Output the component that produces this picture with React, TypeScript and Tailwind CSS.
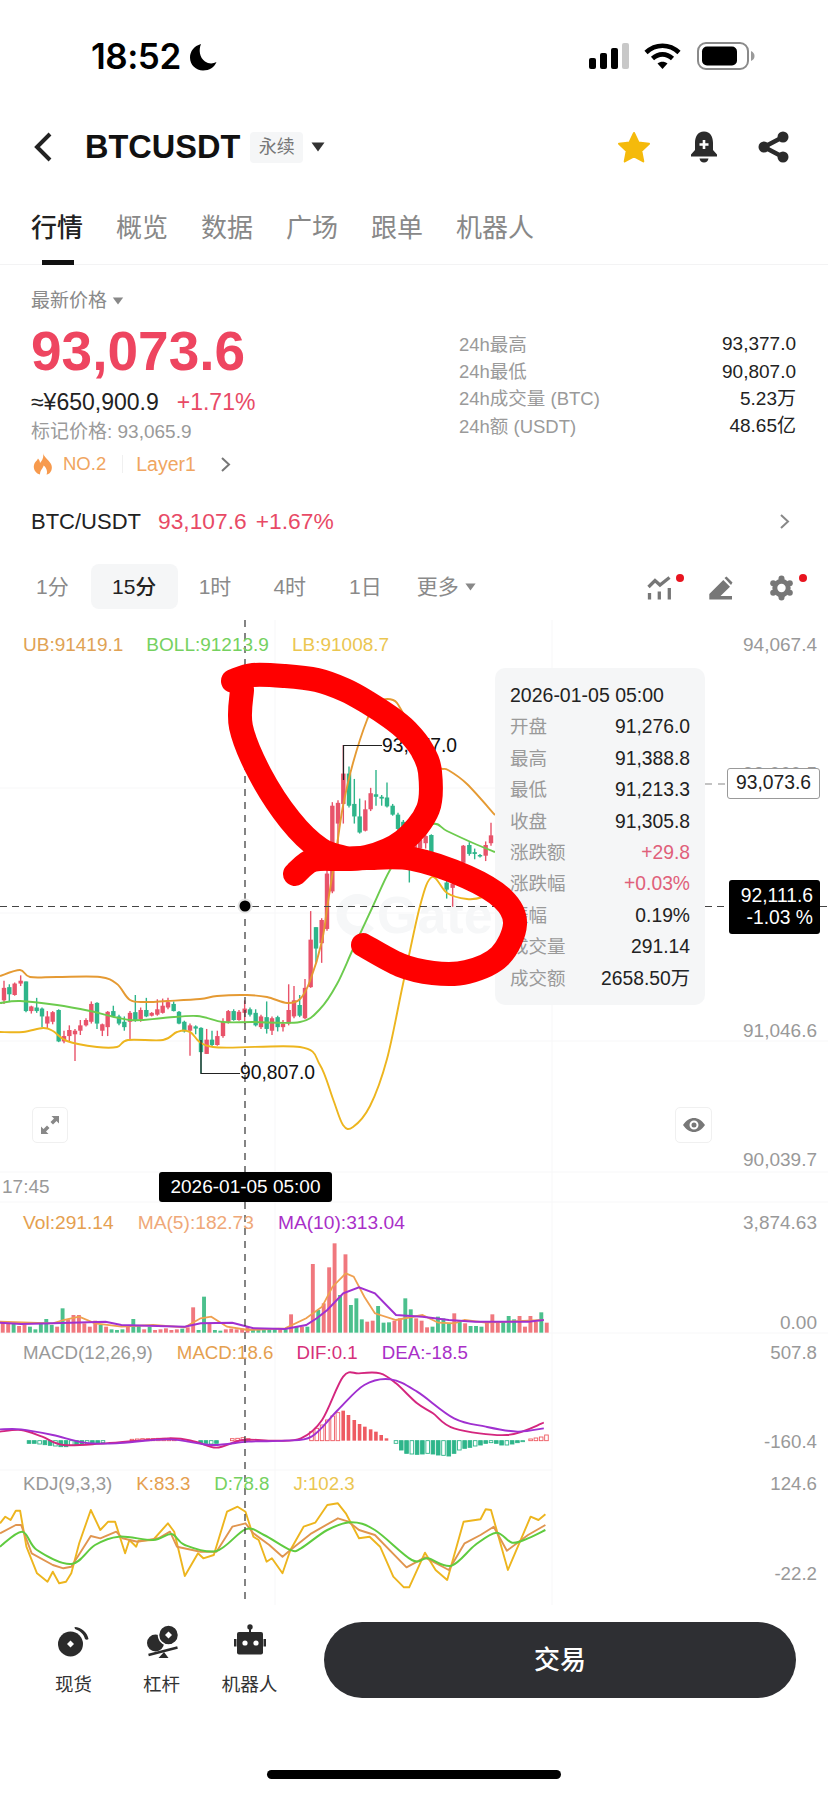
import React from "react";

type P = [number, number];
const smooth = (pts: P[]) => {
  let d = `M${pts[0][0]} ${pts[0][1]}`;
  for (let i = 0; i < pts.length - 1; i++) {
    const p0 = pts[Math.max(i - 1, 0)], p1 = pts[i], p2 = pts[i + 1], p3 = pts[Math.min(i + 2, pts.length - 1)];
    d += ` C${(p1[0] + (p2[0] - p0[0]) / 6).toFixed(1)} ${(p1[1] + (p2[1] - p0[1]) / 6).toFixed(1)} ${(p2[0] - (p3[0] - p1[0]) / 6).toFixed(1)} ${(p2[1] - (p3[1] - p1[1]) / 6).toFixed(1)} ${p2[0]} ${p2[1]}`;
  }
  return d;
};
const line = (pts: P[]) => pts.map((p) => `${p[0].toFixed(1)},${p[1].toFixed(1)}`).join(" ");
const zs = 1.894;
const conv = (base: number, pts: number[][]): P[] => pts.map(([x, y]) => [x / zs, base + y / 3]);

const upper: P[] = [[0,976],[20,970],[30,977],[57,977],[100,977],[117,984],[130,1000],[147,1002],[167,1001],[200,999],[217,996],[247,995],[267,997],[287,1003],[300,999],[310,981],[322,941],[328,902],[337,845],[343,806],[353,763],[367,720],[377,702],[393,700],[403,713],[425,755],[440,768],[448,770],[467,784],[495,815]];
const mid: P[] = [[0,1003],[20,1001],[57,1005],[90,1011],[130,1020],[163,1018],[197,1016],[223,1022],[253,1022],[300,1022],[320,1009],[337,984],[353,949],[373,906],[390,870],[410,841],[433,824],[447,831],[473,843],[495,852]];
const lower: P[] = [[0,1032],[23,1032],[43,1028],[53,1031],[67,1041],[97,1047],[117,1047],[128,1040],[163,1040],[177,1032],[190,1032],[213,1047],[300,1047],[320,1065],[333,1099],[343,1125],[353,1127],[370,1106],[387,1059],[403,984],[420,906],[432,877],[447,893],[467,899],[483,897],[495,890]];

// x, wickTop, bodyTop, bodyBottom, wickBottom (zoom units), colour
const candles: [number, number, number, number, number, string][] = [
[12,1010,1030,1065,1075,"r"],[28,1020,1028,1048,1070,"g"],[44,1015,1018,1050,1052,"r"],[62,995,1010,1018,1025,"r"],[78,1012,1012,1095,1098,"g"],[94,1080,1082,1095,1102,"r"],[110,1058,1085,1095,1100,"g"],[126,1085,1088,1110,1140,"g"],[142,1095,1110,1130,1145,"r"],[158,1095,1098,1125,1132,"r"],[176,1090,1092,1180,1182,"g"],[192,1150,1165,1180,1185,"r"],[208,1135,1148,1165,1180,"r"],[225,1145,1150,1160,1235,"r"],[241,1120,1135,1150,1162,"r"],[258,1115,1120,1135,1138,"r"],[274,1068,1075,1125,1130,"r"],[291,1070,1072,1130,1145,"g"],[307,1130,1132,1150,1165,"r"],[323,1095,1097,1140,1165,"r"],[340,1080,1095,1110,1112,"g"],[357,1105,1110,1130,1135,"g"],[373,1110,1125,1140,1150,"g"],[390,1095,1100,1125,1175,"r"],[406,1050,1098,1120,1125,"g"],[422,1085,1092,1118,1125,"r"],[439,1058,1092,1110,1112,"g"],[455,1098,1100,1108,1110,"r"],[472,1062,1090,1105,1108,"r"],[488,1060,1080,1100,1102,"r"],[504,1058,1070,1085,1090,"r"],[521,1068,1075,1095,1096,"g"],[537,1095,1097,1130,1132,"g"],[553,1122,1125,1152,1155,"g"],[570,1130,1135,1150,1220,"r"],[587,1135,1138,1144,1160,"g"],[603,1140,1142,1210,1270,"g"],[620,1145,1175,1215,1215,"r"],[636,1150,1175,1190,1195,"g"],[652,1150,1165,1190,1192,"r"],[669,1115,1125,1165,1170,"r"],[685,1092,1095,1125,1130,"r"],[701,1090,1095,1120,1122,"g"],[717,1092,1097,1120,1122,"r"],[734,1065,1088,1100,1130,"r"],[750,1085,1090,1105,1110,"g"],[767,1090,1100,1135,1138,"g"],[783,1105,1110,1140,1145,"r"],[800,1068,1112,1145,1158,"g"],[816,1110,1115,1150,1162,"r"],[833,1108,1112,1140,1152,"g"],[849,1120,1130,1140,1152,"r"],[866,1020,1092,1130,1135,"r"],[882,1025,1065,1110,1115,"r"],[899,1050,1078,1108,1112,"g"],[915,1005,1030,1115,1118,"r"],[932,815,895,1028,1030,"r"],[948,860,860,920,960,"g"],[965,835,840,905,960,"r"],[981,700,710,865,870,"r"],[997,510,520,760,765,"r"],[1014,505,512,570,640,"r"],[1030,350,430,515,570,"r"],[1047,410,430,520,525,"g"],[1063,445,515,550,570,"g"],[1079,500,550,595,598,"g"],[1096,505,530,590,592,"r"],[1112,470,485,530,535,"r"],[1128,420,488,495,520,"g"],[1145,490,495,500,520,"g"],[1161,455,497,522,525,"g"],[1178,515,520,545,548,"g"],[1194,540,545,585,590,"g"],[1210,560,565,590,600,"g"],[1228,600,640,660,735,"g"],[1244,600,620,645,650,"r"],[1260,605,615,640,650,"r"],[1277,600,605,625,640,"r"],[1294,600,602,655,660,"g"],[1340,730,735,755,780,"g"],[1358,730,738,750,803,"r"],[1390,630,632,680,690,"r"],[1408,622,630,655,660,"g"],[1424,640,650,655,670,"g"],[1440,655,658,662,665,"g"],[1457,620,630,660,675,"r"],[1473,568,603,625,632,"r"],
];
const RED = "#E8536A";
const GREEN = "#2EB58A";
const my = (v: number) => 620 + v / 2.8;

// volume tops, negative = green
const vol = [458,460,-462,468,464,-470,-478,-462,-447,-465,470,-415,448,435,435,460,470,452,-465,470,-478,-480,-478,468,-447,-465,478,-470,480,478,475,480,478,-476,472,412,-480,-380,460,-480,-482,478,476,478,476,470,-478,-480,-476,-478,-476,478,-478,433,-470,470,-470,282,-420,400,292,220,-375,253,-405,-385,-448,455,452,-408,-458,-457,452,445,-385,-418,445,452,472,-470,-440,-445,-460,430,-455,460,-468,-468,-470,455,433,455,-455,-438,-448,438,470,438,455,-427,458];

const ma10 = conv(1170, [[0,458],[40,462],[100,460],[200,455],[230,465],[350,470],[380,460],[440,458],[480,475],[540,477],[580,465],[600,445],[620,420],[650,370],[680,352],[710,370],[750,435],[800,440],[850,450],[900,455],[1000,455],[1030,450]]);
const ma5 = conv(1170, [[0,455],[100,460],[120,450],[150,440],[180,460],[230,470],[290,465],[350,472],[380,445],[400,440],[430,470],[470,480],[540,475],[580,445],[610,410],[630,350],[655,310],[670,320],[690,380],[710,430],[750,450],[800,435],[830,458],[860,460],[880,450],[920,458],[1030,450]]);
const dif = conv(1170, [[0,785],[40,780],[80,800],[120,825],[200,820],[320,805],[370,815],[410,833],[460,810],[520,812],[570,805],[610,750],[650,620],[680,610],[720,610],[750,640],[790,700],[820,730],[860,775],[960,795],[1030,758]]);
const dea = conv(1170, [[0,778],[40,778],[100,795],[160,818],[220,820],[320,808],[400,825],[470,815],[540,812],[590,800],[640,720],[690,645],[740,628],[790,665],[860,745],[920,770],[980,785],[1030,775]]);
const macdRed = [[590,785],[600,775],[610,765],[620,750],[630,738],[640,728],[650,722],[660,735],[671,750],[681,762],[691,770],[702,778],[712,785],[722,795],[732,805]];
const macdGreen = [[750,820],[760,840],[770,850],[780,852],[790,853],[800,852],[810,850],[820,852],[830,855],[840,856],[850,858],[860,850],[870,840],[880,835],[890,832],[900,828],[910,825],[920,820],[930,818],[940,820],[950,825],[960,825],[970,822],[980,818],[990,815],[55,820],[65,820],[75,822],[85,824],[95,826],[105,828],[115,830],[125,830],[135,826],[145,826],[155,824],[165,822],[175,820],[185,820],[195,818],[380,818],[390,820],[400,822],[410,820]];
const macdSmallRed = [[250,808],[260,807],[270,806],[280,806],[290,806],[300,805],[310,805],[320,805],[330,806],[440,806],[450,805],[460,803],[470,806],[1005,807],[1015,804],[1025,801],[1035,795]];

const kJ = conv(1470, [[0,160],[10,140],[20,150],[30,122],[38,122],[50,230],[70,310],[90,335],[100,305],[112,340],[125,335],[135,310],[150,220],[172,120],[190,180],[205,155],[218,155],[237,250],[245,210],[258,230],[262,212],[290,210],[318,160],[330,185],[350,318],[375,250],[385,265],[405,255],[430,125],[450,110],[465,125],[480,200],[490,210],[505,275],[515,265],[535,310],[550,240],[575,170],[597,158],[620,105],[640,100],[655,130],[680,205],[700,200],[720,230],[745,320],[765,352],[775,352],[805,248],[825,300],[847,330],[878,155],[910,148],[920,118],[930,120],[962,300],[1005,140],[1020,150],[1033,133]]);
const kK = conv(1470, [[0,190],[30,165],[40,165],[60,250],[100,285],[120,295],[135,290],[172,198],[190,205],[220,185],[232,205],[260,215],[300,205],[322,185],[335,230],[380,245],[410,245],[440,170],[465,160],[480,190],[510,225],[535,260],[550,240],[590,190],[640,145],[660,155],[680,180],[710,195],[770,292],[805,262],[850,300],[880,220],[910,195],[935,170],[960,242],[1000,195],[1033,165]]);
const kD = conv(1470, [[0,230],[42,185],[70,240],[135,282],[180,225],[225,200],[290,210],[325,192],[350,225],[410,243],[465,178],[500,195],[550,240],[570,235],[620,180],[665,157],[710,180],[780,270],[810,265],[855,287],[900,225],[940,188],[970,218],[1000,205],[1033,180]]);

const tipRows: [string, string, string][] = [
  ["开盘", "91,276.0", "text-[#222]"],
  ["最高", "91,388.8", "text-[#222]"],
  ["最低", "91,213.3", "text-[#222]"],
  ["收盘", "91,305.8", "text-[#222]"],
  ["涨跌额", "+29.8", "text-[#E0607A]"],
  ["涨跌幅", "+0.03%", "text-[#E0607A]"],
  ["振幅", "0.19%", "text-[#222]"],
  ["成交量", "291.14", "text-[#222]"],
  ["成交额", "2658.50万", "text-[#222]"],
];
const stats = [
  ["24h最高", "93,377.0"],
  ["24h最低", "90,807.0"],
  ["24h成交量 (BTC)", "5.23万"],
  ["24h额 (USDT)", "48.65亿"],
];
const tabs = ["概览", "数据", "广场", "跟单", "机器人"];

function Plots() {
  return (
    <svg className="absolute left-0 top-0" width="828" height="985" viewBox="0 620 828 985" fill="none">
      {/* watermark mark */}
      <path d="M370 905A16 16 0 1 0 370 925" stroke="#f6f7f8" strokeWidth="10" />
      {/* grid */}
      <g stroke="#f7f7f8" strokeWidth="1">
        <path d="M552 620V1605M275 620V1172M275 1202V1605M0 788H552M0 913H552M0 1041H828M0 1172H828M0 1202H828M0 1333H828M0 1470H552" />
      </g>
      <g strokeLinecap="butt">
        {candles.map(([x, wt, bt, bb, wb, c], i) => {
          const col = c === "r" ? RED : GREEN;
          const cx = x / 3;
          return (
            <g key={i}>
              <line x1={cx} x2={cx} y1={my(wt)} y2={my(wb)} stroke={col} strokeWidth="1.4" />
              <rect x={cx - 2.2} y={my(bt)} width="4.4" height={Math.max((bb - bt) / 2.8, 1.5)} fill={col} />
            </g>
          );
        })}
      </g>
      <path d={smooth(upper)} stroke="#E59A33" strokeWidth="1.9" />
      <path d={smooth(mid)} stroke="#6CCB4E" strokeWidth="1.9" />
      <path d={smooth(lower)} stroke="#EDB51E" strokeWidth="1.9" />
      {/* high / low markers */}
      <path d="M343.5 780V745.5H382" stroke="#222" strokeWidth="1.2" />
      <path d="M201 1040V1073.5H240" stroke="#222" strokeWidth="1.2" />
      {/* dashed guides */}
      <path d="M705 784H727" stroke="#888" strokeWidth="1.2" strokeDasharray="7 6" />
      <path d="M552 784H705" stroke="#eee" strokeWidth="1" />
      <path d="M0 906.5H495M705 906.5H729M820 906.5H828" stroke="#444" strokeWidth="1.2" strokeDasharray="7 5" />
      {/* volume */}
      {vol.map((t, i) => {
        const top = Math.abs(t);
        return <rect key={i} x={i * 5.44 + 0.8} y={1170 + top / 3} width="3.9" height={(488 - top) / 3} fill={t < 0 ? "#4CC08D" : "#F0787E"} />;
      })}
      <polyline points={line(ma5)} stroke="#EFA050" strokeWidth="1.8" />
      <polyline points={line(ma10)} stroke="#A030D0" strokeWidth="2" />
      {/* macd */}
      {macdRed.map(([x, t], i) => (
        <rect key={i} x={x / zs - 1.8} y={1170 + t / 3} width="3.6" height={(812 - t) / 3} fill={x >= 645 ? "#EE5A62" : "#fff"} stroke="#EE5A62" strokeWidth={x >= 645 ? 0 : 0.9} />
      ))}
      {macdGreen.map(([x, b], i) => (
        <rect key={i} x={x / zs - 1.8} y={1170 + 812 / 3} width="3.6" height={(b - 812) / 3} fill={i % 3 === 0 ? "#fff" : "#2EB58A"} stroke="#2EB58A" strokeWidth="0.9" />
      ))}
      {macdSmallRed.map(([x, t], i) => (
        <rect key={i} x={x / zs - 1.8} y={1170 + t / 3} width="3.6" height={(812 - t) / 3} fill="#fff" stroke="#EE5A62" strokeWidth="0.9" />
      ))}
      <path d={smooth(dif)} stroke="#D4267E" strokeWidth="1.9" />
      <path d={smooth(dea)} stroke="#A030D0" strokeWidth="1.9" />
      {/* kdj */}
      <polyline points={line(kJ)} stroke="#EDB51E" strokeWidth="1.9" strokeLinejoin="round" />
      <polyline points={line(kK)} stroke="#E0954F" strokeWidth="1.9" strokeLinejoin="round" />
      <path d={smooth(kD)} stroke="#5FCB3F" strokeWidth="2" />
      {/* crosshair */}
      <path d="M245 620V1172M245 1202V1602" stroke="#333" strokeWidth="1.2" strokeDasharray="7 6" />
      <circle cx="245" cy="906" r="7.5" fill="#e6e6e6" />
      <circle cx="245" cy="906" r="5.5" fill="#000" />
    </svg>
  );
}

function Scribble() {
  return (
    <svg className="absolute left-0 top-0 z-30" width="828" height="985" viewBox="0 620 828 985" fill="none" stroke="#FF0000" strokeWidth="24" strokeLinecap="round" strokeLinejoin="round">
      <path d={smooth([[233,681],[253,675],[285,676],[317,680],[345,690],[367,702],[390,717],[407,731],[422,750],[430,772],[428,809],[403,841],[367,857],[330,859]])} />
      <path d={smooth([[242,690],[241,727],[260,774],[290,820],[320,849],[345,858]])} />
      <path d={smooth([[295,874],[313,860],[345,859],[367,858],[413,859],[467,877],[503,899],[515,924],[500,956],[467,972],[433,973],[400,965],[363,945]])} />
    </svg>
  );
}

const Tri = ({ cls, fill }: { cls: string; fill: string }) => (
  <svg className={cls} viewBox="0 0 14 10"><path d="M0.5 0.5H13.5L7 9.5Z" fill={fill} /></svg>
);

export default function App() {
  return (
    <div className="relative flex h-[1795px] w-[828px] flex-col overflow-hidden bg-white font-['Liberation_Sans','Noto_Sans_CJK_SC',sans-serif] text-[#222]">
      {/* status bar */}
      <div className="flex h-[110px] shrink-0 items-start pl-[91px] pr-[73px] pt-[37px]">
        <span className="font-['Inter',sans-serif] text-[35px] font-semibold leading-[38px] tracking-[-0.5px] text-black">18:52</span>
        <svg className="ml-[9px] mt-[6px]" width="27" height="28" viewBox="0 0 27 28"><path d="M11 1C4 3 0 8.500 0 14.500 0 22 6 27.500 13 27.500 19.500 27.500 24.500 24 26.500 19 23 21 18.500 21 15 18.500 9.500 14.500 8.500 7 11 1Z" fill="#000" /></svg>
        <div className="ml-auto flex items-start">
          <svg className="mt-[6px]" width="40" height="26" viewBox="0 0 40 26">
            <rect x="0" y="15" width="7" height="11" rx="2" fill="#000" /><rect x="11" y="10" width="7" height="16" rx="2" fill="#000" /><rect x="22" y="5" width="7" height="21" rx="2" fill="#000" /><rect x="33" y="0" width="7" height="26" rx="2" fill="#c8c8c8" />
          </svg>
          <svg className="ml-[15px] mt-[6px]" width="37" height="26" viewBox="0 0 37 26" fill="none" stroke="#000" strokeWidth="4.6">
            <path d="M2 9.500C11.500 0.500 25.500 0.500 35 9.500" /><path d="M8.500 15.500C14.500 10 22.500 10 28.500 15.500" /><path d="M18.500 26L13.500 20.500C16.500 18 20.500 18 23.500 20.500Z" fill="#000" stroke="none" />
          </svg>
          <svg className="ml-[16px] mt-[5px]" width="58" height="28" viewBox="0 0 58 28">
            <rect x="1" y="1" width="50" height="26" rx="8" fill="#fff" stroke="#8a8a8a" strokeWidth="2" />
            <rect x="5" y="4.500" width="35" height="19" rx="5" fill="#000" />
            <path d="M54 9C56.500 10 57.500 12 57.500 14S56.500 18 54 19Z" fill="#9a9a9a" />
          </svg>
        </div>
      </div>
      {/* header */}
      <div className="flex h-[74px] shrink-0 items-center pl-[33px] pr-[39px]">
        <svg width="20" height="30" viewBox="0 0 20 30" fill="none"><path d="M17 2L4 15L17 28" stroke="#222" strokeWidth="4" /></svg>
        <span className="ml-[32px] text-[32.500px] font-bold leading-none text-[#111]">BTCUSDT</span>
        <span className="ml-[10px] flex h-[31px] w-[53px] items-center justify-center rounded-[4px] bg-[#f5f6f7] text-[18px] text-[#777]">永续</span>
        <Tri cls="ml-[8px] h-[10px] w-[14px]" fill="#333" />
        <svg className="ml-auto" width="34" height="32" viewBox="0 0 34 32"><path d="M17 2L21.500 11.500L32 12.800L24.300 20L26.300 30.500L17 25.300L7.700 30.500L9.700 20L2 12.800L12.500 11.500Z" fill="#F5BA0B" stroke="#F5BA0B" strokeWidth="2" strokeLinejoin="round" /></svg>
        <svg className="ml-[38px]" width="30" height="32" viewBox="0 0 30 32">
          <path d="M15 0.500C8.500 0.500 6 6 6 12V19L2 23.500V25.500H28V23.500L24 19V12C24 6 21.500 0.500 15 0.500Z" fill="#2b2b2b" />
          <path d="M10.500 27.500H19.500C19 30 17.500 31.500 15 31.500S11 30 10.500 27.500Z" fill="#2b2b2b" />
          <path d="M15 9V18M10.500 13.500H19.500" stroke="#fff" strokeWidth="2.600" />
        </svg>
        <svg className="ml-[39px]" width="31" height="32" viewBox="0 0 31 32">
          <path d="M25 6L6 16L25 26" fill="none" stroke="#2b2b2b" strokeWidth="4.500" />
          <circle cx="25" cy="6" r="5.500" fill="#2b2b2b" /><circle cx="6" cy="16" r="5.500" fill="#2b2b2b" /><circle cx="25" cy="26" r="5.500" fill="#2b2b2b" />
        </svg>
      </div>
      {/* tabs */}
      <div className="flex h-[81px] shrink-0 items-start gap-[33px] border-b border-[#f3f3f4] pl-[31px] pt-[30px] text-[26px] leading-[28px] text-[#888]">
        <div className="relative h-[51px] font-medium text-[#222]">
          行情
          <span className="absolute bottom-0 left-[11px] h-[5px] w-[32px] bg-[#111]" />
        </div>
        {tabs.map((t) => <span key={t}>{t}</span>)}
      </div>
      {/* summary */}
      <div className="flex h-[236px] shrink-0 pl-[31px] pr-[32px]">
        <div className="flex w-[428px] flex-col pt-[24px]">
          <div className="flex h-[24px] items-center text-[19px] leading-[24px] text-[#8a8a8a]">
            最新价格<Tri cls="ml-[5px] h-[8px] w-[12px]" fill="#888" />
          </div>
          <div className="mt-[10px] h-[56px] text-[55px] font-bold leading-[56px] text-[#EE4560]">93,073.6</div>
          <div className="mt-[10px] flex h-[26px] items-center text-[23px] leading-[26px]">
            <span className="text-[#222]">≈¥650,900.9</span>
            <span className="ml-[18px] text-[#E84A66]">+1.71%</span>
          </div>
          <div className="mt-[5px] h-[24px] text-[19px] leading-[24px] text-[#9a9a9a]">标记价格: 93,065.9</div>
          <div className="mt-[8px] flex h-[24px] items-center text-[18.500px] leading-[24px] text-[#F0A560]">
            <svg className="ml-[2px]" width="20" height="22" viewBox="0 0 20 22"><path d="M10 0C11 4 15 6 18 11 20.500 16 17 22 13.500 21.500 15 18 13 14 10.500 12.500 10.500 15 7 17 7 21.500 2.500 20.500 0 16 1 12 1.500 9 4 8 5 5.500 6.500 7 7 8.500 7 10 9.500 7 11 4 10 0Z" fill="#F79A4D" /></svg>
            <span className="ml-[10px]">NO.2</span>
            <span className="ml-[16px] h-[18px] w-px bg-[#f0f0f0]" />
            <span className="ml-[13px] text-[19.500px]">Layer1</span>
            <svg className="ml-[24px]" width="11" height="15" viewBox="0 0 11 15" fill="none"><path d="M2 1L9 7.500L2 14" stroke="#777" strokeWidth="2" /></svg>
          </div>
        </div>
        <div className="flex flex-1 flex-col pt-[66px]">
          {stats.map(([l, v]) => (
            <div key={l} className="flex h-[27.33px] items-center justify-between text-[18.500px]">
              <span className="text-[#9a9a9a]">{l}</span>
              <span className="text-[19px] text-[#222]">{v}</span>
            </div>
          ))}
        </div>
      </div>
      {/* spot link */}
      <div className="flex h-[40px] shrink-0 items-center pl-[31px] pr-[38px] text-[22.800px]">
        <span className="text-[22px] text-[#222]">BTC/USDT</span>
        <span className="ml-[17px] text-[#E84A66]">93,107.6</span>
        <span className="ml-[9px] text-[#E84A66]">+1.67%</span>
        <svg className="ml-auto" width="11" height="15" viewBox="0 0 11 15" fill="none"><path d="M2 1L9 7.500L2 14" stroke="#888" strokeWidth="2" /></svg>
      </div>
      {/* intervals */}
      <div className="mt-[23px] flex h-[45px] shrink-0 items-center pl-[36px] text-[21px] text-[#8a8a8a]">
        <span>1分</span>
        <span className="ml-[22px] flex h-[45px] w-[87px] items-center justify-center rounded-[8px] bg-[#f5f6f7] font-medium text-[#222]">15分</span>
        <span className="ml-[21px]">1时</span>
        <span className="ml-[42px]">4时</span>
        <span className="ml-[43px]">1日</span>
        <span className="ml-[35px]">更多</span>
        <Tri cls="ml-[6px] h-[8px] w-[11px]" fill="#888" />
        <svg className="ml-auto mr-[8px]" width="190" height="45" viewBox="630 562 190 45" fill="none">
          <path d="M648.500 585L655 578.500L660 583L669.500 575.500" stroke="#777" strokeWidth="3.300" />
          <path d="M649.500 591V597.500M659.300 589.500V597.500M669.300 586V597.500" stroke="#777" strokeWidth="3.300" />
          <path d="M709.300 592L723.300 578L730 584.700L720.500 594H732V597.500H709.300Z" fill="#777" />
          <path d="M724.500 576L726.500 574.500L732.500 580.500L731 583Z" fill="#777" />
          {[30, 90, 150, 210, 270, 330].map((a) => (
            <circle key={a} cx={781.5 + 9.6 * Math.cos((a * Math.PI) / 180)} cy={586 + 9.6 * Math.sin((a * Math.PI) / 180)} r="3" fill="#777" />
          ))}
          <circle cx="781.500" cy="586" r="6.700" fill="none" stroke="#777" strokeWidth="5" />
          <circle cx="803" cy="576" r="4" fill="#E8141F" /><circle cx="680" cy="576" r="4" fill="#E8141F" />
        </svg>
      </div>
      {/* chart */}
      <div className="relative mt-[11px] h-[985px] shrink-0">
        <div className="absolute left-[377px] top-[265px] text-[52px] font-bold leading-[60px] text-[#f6f7f8]">Gate</div>
        <Plots />
        {/* main */}
        <div className="relative flex h-[552px] items-start justify-between pr-[11px] pt-[14px] text-[19px] leading-[22px]">
          <div className="flex pl-[23px]">
            <span className="text-[#E0A255]">UB:91419.1</span>
            <span className="ml-[23px] text-[#75D160]">BOLL:91213.9</span>
            <span className="ml-[23px] text-[#EBC651]">LB:91008.7</span>
          </div>
          <div className="flex h-full flex-col items-end justify-between pb-[1px] text-[#999]">
            <span>94,067.4</span><span>93,060.5</span><span>92,053.5</span><span>91,046.6</span><span>90,039.7</span>
          </div>
        </div>
        {/* time axis */}
        <div className="relative flex h-[30px] items-center pl-[2px] text-[19px] text-[#999]">17:45</div>
        {/* vol */}
        <div className="relative flex h-[131px] items-start justify-between pr-[11px] pt-[10px] text-[19.200px] leading-[22px]">
          <div className="flex pl-[23px]">
            <span className="text-[#E5A04F]">Vol:291.14</span>
            <span className="ml-[24px] text-[#EFA878]">MA(5):182.73</span>
            <span className="ml-[24px] text-[#A92FC8]">MA(10):313.04</span>
          </div>
          <div className="flex h-full flex-col items-end justify-between text-[19px] text-[#999]">
            <span>3,874.63</span><span className="mb-[-1px]">0.00</span>
          </div>
        </div>
        {/* macd */}
        <div className="relative flex h-[137px] items-start justify-between pr-[11px] pt-[9px] text-[18.700px] leading-[22px]">
          <div className="flex pl-[23px]">
            <span className="text-[#999]">MACD(12,26,9)</span>
            <span className="ml-[24px] text-[#E5A04F]">MACD:18.6</span>
            <span className="ml-[23px] text-[#D6307A]">DIF:0.1</span>
            <span className="ml-[24px] text-[#A92FC8]">DEA:-18.5</span>
          </div>
          <div className="flex h-[111px] flex-col items-end justify-between text-[#999]">
            <span>507.8</span><span>-160.4</span>
          </div>
        </div>
        {/* kdj */}
        <div className="relative flex h-[135px] items-start justify-between pr-[11px] pt-[3px] text-[18.700px] leading-[22px]">
          <div className="flex pl-[23px]">
            <span className="text-[#999]">KDJ(9,3,3)</span>
            <span className="ml-[24px] text-[#E5A04F]">K:83.3</span>
            <span className="ml-[24px] text-[#75D160]">D:78.8</span>
            <span className="ml-[24px] text-[#EBC651]">J:102.3</span>
          </div>
          <div className="flex h-[112px] flex-col items-end justify-between text-[#999]">
            <span>124.6</span><span>-22.2</span>
          </div>
        </div>

        {/* overlays */}
        <span className="absolute left-[382px] top-[115px] bg-white text-[19.300px] leading-[22px] text-[#111]">93,377.0</span>
        <span className="absolute left-[240px] top-[442px] text-[19.300px] leading-[22px] text-[#111]">90,807.0</span>
        <div className="absolute left-[32px] top-[487px] flex h-[36px] w-[36px] items-center justify-center rounded-[5px] border border-[#f0f0f0] bg-white">
          <svg width="20" height="20" viewBox="0 0 20 20" fill="#888"><path d="M19 1H11.500L14 3.500L10.500 7L13 9.500L16.500 6L19 8.500Z" /><path d="M1 19H8.500L6 16.500L9.500 13L7 10.500L3.500 14L1 11.500Z" /></svg>
        </div>
        <div className="absolute left-[675px] top-[487px] flex h-[36px] w-[37px] items-center justify-center rounded-[5px] border border-[#f0f0f0] bg-white">
          <svg width="22" height="14" viewBox="0 0 22 14"><path fillRule="evenodd" d="M0 7C3 2.500 7 0 11 0S19 2.500 22 7C19 11.500 15 14 11 14S3 11.500 0 7ZM11 2.500A4.500 4.500 0 1 0 11 11.500A4.500 4.500 0 1 0 11 2.500ZM11 4.500A2.500 2.500 0 1 1 11 9.500A2.500 2.500 0 1 1 11 4.500Z" fill="#777" /></svg>
        </div>
        <div className="absolute left-[495px] top-[48px] flex h-[337px] w-[210px] flex-col rounded-[10px] bg-[#f4f5f7]/95 pl-[15px] pr-[15px] pt-[12px] text-[19.300px]">
          <div className="h-[31.400px] whitespace-nowrap text-[19.500px] leading-[31.400px] text-[#222]">2026-01-05 05:00</div>
          {tipRows.map(([l, v, c]) => (
            <div key={l} className="flex h-[31.400px] items-center justify-between leading-[31.400px]">
              <span className="text-[18.500px] text-[#9a9a9a]">{l}</span>
              <span className={c}>{v}</span>
            </div>
          ))}
        </div>
        <div className="absolute left-[727px] top-[148px] flex h-[31px] w-[93px] items-center justify-center rounded-[3px] border border-[#999] bg-white text-[19.300px] text-[#222]">93,073.6</div>
        <div className="absolute left-[729px] top-[260px] flex h-[54px] w-[91px] flex-col items-end justify-center rounded-[3px] bg-black pr-[7px] text-[19.300px] leading-[22px] text-white">
          <span>92,111.6</span><span>-1.03 %</span>
        </div>
        <div className="absolute left-[159px] top-[552px] flex h-[30px] w-[173px] items-center justify-center rounded-[3px] bg-black text-[19px] text-white">2026-01-05 05:00</div>
        <Scribble />
      </div>
      {/* bottom bar */}
      <div className="mt-[2px] flex h-[100px] shrink-0 items-start pr-[32px] pt-[15px]">
        <div className="flex w-[324px] gap-[21px] pl-[40px]">
          <div className="flex w-[67px] flex-col items-center">
            <svg width="40" height="36" viewBox="53.500 1622 40 36">
              <path d="M74 1627C81 1627 87 1633 88 1639C87 1640 85.500 1640 84.500 1639C83.500 1634 79 1630.500 74.500 1629Z" fill="#2b2b2b" />
              <circle cx="70" cy="1644" r="12.500" fill="#2b2b2b" /><path d="M70 1640.500L73.500 1644L70 1647.500L66.500 1644Z" fill="#fff" />
            </svg>
            <span className="mt-[16px] text-[18.500px] leading-[22px] text-[#333]">现货</span>
          </div>
          <div className="flex w-[67px] flex-col items-center">
            <svg width="40" height="36" viewBox="141.500 1622 40 36">
              <circle cx="155" cy="1643" r="8.500" fill="#2b2b2b" />
              <circle cx="168" cy="1635" r="10" fill="#2b2b2b" stroke="#fff" strokeWidth="1.500" /><path d="M168 1631.500L171.500 1635L168 1638.500L164.500 1635Z" fill="#fff" />
              <path d="M148 1655L177 1647.500" stroke="#2b2b2b" strokeWidth="2.500" /><path d="M163.500 1652L168 1658H158Z" fill="#2b2b2b" />
            </svg>
            <span className="mt-[16px] text-[18.500px] leading-[22px] text-[#333]">杠杆</span>
          </div>
          <div className="flex w-[67px] flex-col items-center">
            <svg width="40" height="36" viewBox="230 1622 40 36">
              <circle cx="250" cy="1627" r="2.700" fill="#2b2b2b" /><rect x="249" y="1628" width="2" height="5" fill="#2b2b2b" />
              <rect x="237" y="1632" width="26" height="22.500" rx="2" fill="#2b2b2b" /><rect x="234" y="1639" width="2.500" height="7.500" fill="#2b2b2b" /><rect x="263.500" y="1639" width="2.500" height="7.500" fill="#2b2b2b" />
              <circle cx="245" cy="1643" r="2.600" fill="#fff" /><circle cx="256" cy="1643" r="2.600" fill="#fff" />
            </svg>
            <span className="mt-[16px] text-[18.700px] leading-[22px] text-[#333]">机器人</span>
          </div>
        </div>
        <div className="flex h-[76px] flex-1 items-center justify-center rounded-full bg-[#2E2F33] text-[26px] font-medium text-white">交易</div>
      </div>
      {/* home indicator */}
      <div className="mt-[63px] flex shrink-0 justify-center">
        <span className="h-[9px] w-[294px] rounded-full bg-black" />
      </div>
    </div>
  );
}
